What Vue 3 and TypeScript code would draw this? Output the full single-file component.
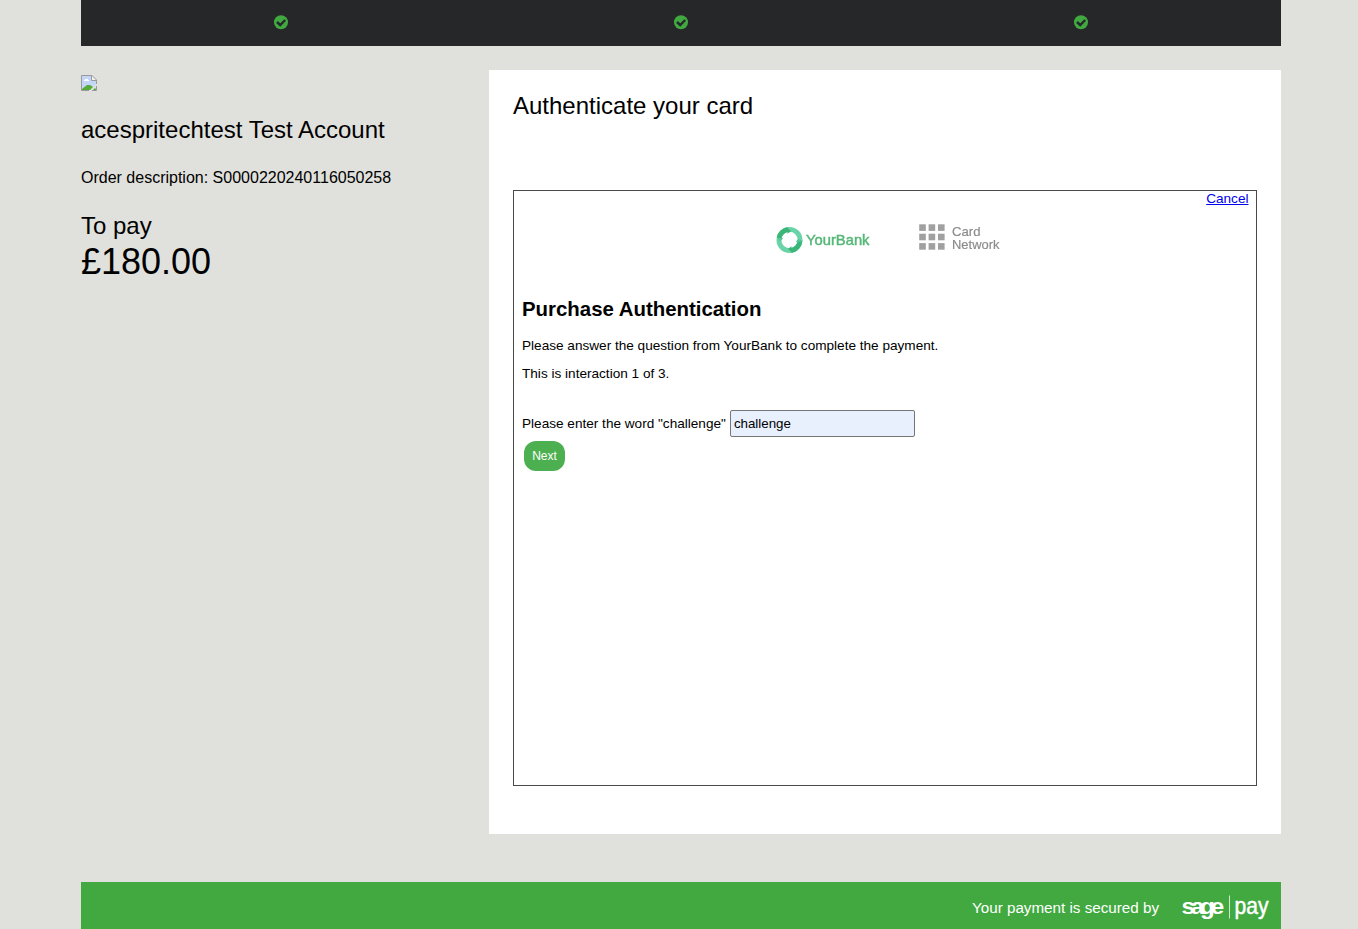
<script setup lang="ts">
import { ref } from 'vue'

const steps: string[] = ['details', 'payment', 'confirm']
const answer = ref<string>('challenge')
const squares: number[] = [0, 9.4, 18.8]
</script>

<template>
  <div class="page">
    <header class="steps">
      <div v-for="step in steps" :key="step" class="step">
        <svg class="tick" viewBox="0 0 14 15" width="14" height="15">
          <circle cx="7" cy="7.3" r="7" fill="#41a940" />
          <path d="M3 7 L6.2 10 L11.2 5" fill="none" stroke="#262729" stroke-width="2.4" />
        </svg>
      </div>
    </header>

    <div class="columns">
      <aside class="summary">
        <svg class="broken" width="16" height="16" viewBox="0 0 16 16">
          <path d="M1 1 H11 L15 5 V15 H1 Z" fill="#c3d6f8" />
          <path d="M11 1 L15 5 H11 Z" fill="#f4f4f4" />
          <path d="M3 6 V5 H4 V4 H7 V5 H8 V6 Z" fill="#fff" />
          <path d="M1 15 V14 L6 10 H9 L15 14 V15 Z" fill="#56ac37" />
          <path d="M8 16 L16 8 V11 L11 16 Z" fill="#e0e1dc" />
          <path d="M8 15.5 H.5 V.5 H11 L15.5 5 V9 M10.5 .5 V5.5 H15.5 M15.5 11 V15.5 H11" fill="none" stroke="#9a9a9a" />
        </svg>
        <h1 class="title account">acespritechtest Test Account</h1>
        <p class="order">Order description: S0000220240116050258</p>
        <h2 class="title">To pay</h2>
        <div class="amount">£180.00</div>
      </aside>

      <main class="card">
        <h2 class="title">Authenticate your card</h2>
        <section class="frame">
          <div class="cancel"><a href="#">Cancel</a></div>
          <div class="logos">
            <svg class="soft" width="96" height="32" viewBox="0 0 96 32">
              <g fill="none" stroke-width="4.8">
                <circle cx="14.5" cy="16" r="10.6" stroke="#6ad3a8" />
                <path d="M4.1 14 A10.6 10.6 0 0 1 13 5.5" stroke="#3bb678" />
                <path d="M25 16.5 A10.6 10.6 0 0 1 16 26.5" stroke="#3bb678" />
              </g>
              <path d="M12.5 4 L16 7 L12.5 9.8 Z M16.5 28 L13 25 L16.5 22.2 Z" fill="#3bb678" />
              <path d="M2.3 14 L5.5 17.5 L8.2 14 Z M26.8 18 L23.5 14.5 L20.8 18 Z" fill="#55c898" />
              <text x="31" y="21" textLength="63.5" lengthAdjust="spacingAndGlyphs" font-size="14.4" fill="#55b777" stroke="#55b777" stroke-width=".45">YourBank</text>
            </svg>
            <svg class="soft network" width="84" height="32" viewBox="0 0 84 32">
              <g fill="#a0a0a0">
                <template v-for="y in squares" :key="y">
                  <rect v-for="x in squares" :key="x" :x="x + 1.2" :y="y + 2.3" width="6.6" height="6.6" />
                </template>
              </g>
              <g fill="#8c8c8c" stroke="#8c8c8c" stroke-width=".2" font-size="13.6">
                <text x="34" y="14.2" textLength="28.5" lengthAdjust="spacingAndGlyphs">Card</text>
                <text x="34" y="27.2" textLength="47.5" lengthAdjust="spacingAndGlyphs">Network</text>
              </g>
            </svg>
          </div>
          <h3 class="purchase">Purchase Authentication</h3>
          <p class="line">Please answer the question from YourBank to complete the payment.</p>
          <p class="line">This is interaction 1 of 3.</p>
          <form class="challenge" @submit.prevent>
            <label for="word">Please enter the word "challenge"</label>
            <input id="word" v-model="answer" type="text" />
          </form>
          <button class="next" type="button">Next</button>
        </section>
      </main>
    </div>

    <footer class="footer">
      <svg width="310" height="47" viewBox="0 0 310 47" fill="#fff">
        <text x="1" y="31" font-size="15.5" textLength="187" lengthAdjust="spacingAndGlyphs">Your payment is secured by</text>
        <g transform="translate(210.5 32) scale(1.1 1)">
          <text class="sage" x="0" y="0">sage</text>
        </g>
        <rect x="258" y="13.5" width="1" height="23" opacity=".75" />
        <text x="263.5" y="32" font-size="24" textLength="34" lengthAdjust="spacingAndGlyphs" stroke="#fff" stroke-width=".5">pay</text>
      </svg>
    </footer>
  </div>
</template>

<style>
body {
  background: #e0e1dc;
}
</style>

<style scoped>
.page {
  width: 1200px;
  height: 929px;
  margin-left: 81px;
  overflow: hidden;
  font-family: 'Liberation Sans', Arial, sans-serif;
  color: #000;
}

.steps {
  display: flex;
  height: 46px;
  background: #262729;
}

.step {
  flex: 1;
  display: flex;
  justify-content: center;
  padding-top: 15px;
}

.tick {
  display: block;
}

.columns {
  display: flex;
  justify-content: space-between;
  margin-top: 24px;
}

.summary {
  padding-top: 5px;
}

.broken {
  display: block;
}

.title {
  margin: 0;
  font-size: 24px;
  line-height: 24px;
  font-weight: normal;
}

.account {
  margin-top: 27px;
}

.order {
  margin: 24px 0;
  font-size: 16px;
  line-height: 24px;
}

.amount {
  font-size: 36px;
  line-height: 48px;
}

.card {
  box-sizing: border-box;
  width: 792px;
  height: 764px;
  padding: 24px;
  background: #fff;
}

.frame {
  box-sizing: border-box;
  height: 596px;
  margin-top: 72px;
  padding: 0 8px;
  border: 1px solid #4a4a4a;
  font-size: 13.6px;
}

.cancel {
  height: 33px;
  margin-right: -0.5px;
  line-height: 15px;
  text-align: right;
}

.cancel a {
  color: #0000ee;
}

.logos {
  display: flex;
  padding-left: 253px;
}

.soft {
  display: block;
  filter: blur(0.4px);
}

.network {
  margin-left: 47px;
  margin-top: -2px;
}

.purchase {
  margin: 41px 0 0;
  font-size: 20.4px;
  line-height: 24px;
}

.line {
  margin: 17px 0 0;
  line-height: 15px;
}

.line + .line {
  margin-top: 13px;
}

.challenge {
  display: flex;
  align-items: center;
  gap: 4px;
  margin-top: 29px;
}

.challenge input {
  box-sizing: border-box;
  width: 185px;
  height: 27px;
  padding: 1px 3px;
  border: 1px solid #767676;
  border-radius: 2px;
  background: #e8f0fe;
  font: 13.333px 'Liberation Sans', Arial, sans-serif;
  color: #000;
}

.next {
  display: block;
  width: 41px;
  height: 30px;
  margin: 4px 2px;
  padding: 0;
  border: 0;
  border-radius: 12px;
  background: #4caf50;
  color: #fff;
  font: 12px 'Liberation Sans', Arial, sans-serif;
}

.footer {
  display: flex;
  justify-content: flex-end;
  height: 47px;
  margin-top: 48px;
  background: #41a940;
}

.sage {
  font-size: 22px;
  font-weight: bold;
  letter-spacing: -3.8px;
}
</style>
